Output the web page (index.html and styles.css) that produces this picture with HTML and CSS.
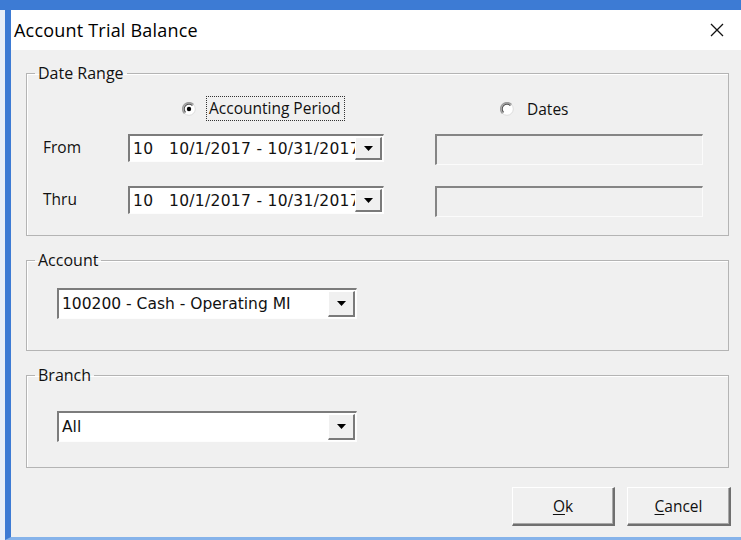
FILE: index.html
```html
<!DOCTYPE html>
<html lang="en">
<head>
<meta charset="utf-8">
<title>Account Trial Balance</title>
<link rel="stylesheet" href="styles.css">
</head>
<body>
<div class="frame">
  <div class="window">
    <header class="titlebar">
      <span class="title">Account Trial Balance</span>
      <svg class="close" width="14" height="14" viewBox="0 0 14 14" aria-label="Close">
        <path d="M1 1 L13 13 M13 1 L1 13" stroke="#111" stroke-width="1.3" fill="none"/>
      </svg>
    </header>

    <main class="content">
      <fieldset class="group group-dates">
        <legend>Date Range</legend>
        <div class="date-grid">
          <label class="radio radio-period">
            <svg class="radio-dot" width="14" height="14" viewBox="0 0 14 14">
              <circle cx="7" cy="7" r="6.3" fill="#fff" stroke="#dcdcdc" stroke-width="1"/>
              <path d="M2.5 11.5 A6.3 6.3 0 0 1 11.5 2.5" stroke="#9c9c9c" stroke-width="1.5" fill="none"/>
              <path d="M3.6 10.4 A4.8 4.8 0 0 1 10.4 3.6" stroke="#555" stroke-width="1.2" fill="none"/>
              <circle cx="7" cy="7" r="2.2" fill="#000"/>
            </svg>
            <span class="focus">Accounting Period</span>
          </label>
          <label class="radio radio-dates">
            <svg class="radio-dot" width="14" height="14" viewBox="0 0 14 14">
              <circle cx="7" cy="7" r="6.3" fill="#fff" stroke="#dcdcdc" stroke-width="1"/>
              <path d="M2.5 11.5 A6.3 6.3 0 0 1 11.5 2.5" stroke="#9c9c9c" stroke-width="1.5" fill="none"/>
              <path d="M3.6 10.4 A4.8 4.8 0 0 1 10.4 3.6" stroke="#555" stroke-width="1.2" fill="none"/>
            </svg>
            <span>Dates</span>
          </label>

          <span class="field-label row-from">From</span>
          <div class="combo combo-period row-from">
            <span class="combo-text">10&nbsp;&nbsp;&nbsp;10/1/2017 - 10/31/2017</span>
            <span class="combo-btn"><svg width="9" height="5" viewBox="0 0 9 5"><path d="M0 0 H9 L4.5 5 Z" fill="#000"/></svg></span>
          </div>
          <div class="textbox row-from"></div>

          <span class="field-label row-thru">Thru</span>
          <div class="combo combo-period row-thru">
            <span class="combo-text">10&nbsp;&nbsp;&nbsp;10/1/2017 - 10/31/2017</span>
            <span class="combo-btn"><svg width="9" height="5" viewBox="0 0 9 5"><path d="M0 0 H9 L4.5 5 Z" fill="#000"/></svg></span>
          </div>
          <div class="textbox row-thru"></div>
        </div>
      </fieldset>

      <fieldset class="group group-account">
        <legend>Account</legend>
        <div class="group-body">
          <div class="combo combo-wide">
            <span class="combo-text">100200 - Cash - Operating MI</span>
            <span class="combo-btn"><svg width="9" height="5" viewBox="0 0 9 5"><path d="M0 0 H9 L4.5 5 Z" fill="#000"/></svg></span>
          </div>
        </div>
      </fieldset>

      <fieldset class="group group-branch">
        <legend>Branch</legend>
        <div class="group-body">
          <div class="combo combo-wide">
            <span class="combo-text">All</span>
            <span class="combo-btn"><svg width="9" height="5" viewBox="0 0 9 5"><path d="M0 0 H9 L4.5 5 Z" fill="#000"/></svg></span>
          </div>
        </div>
      </fieldset>

      <div class="actions">
        <button class="btn btn-ok" type="button"><u>O</u>k</button>
        <button class="btn btn-cancel" type="button"><u>C</u>ancel</button>
      </div>
    </main>
  </div>
</div>
</body>
</html>
```

FILE: styles.css
```css
* {
  box-sizing: border-box;
}

html, body {
  margin: 0;
  padding: 0;
  width: 741px;
  height: 540px;
  overflow: hidden;
}

body {
  font-family: "Open Sans", "Noto Sans", sans-serif;
  font-size: 15.5px;
  color: #111;
}

/* Outer window chrome: accent band on top, accent edge on the left */
.frame {
  height: 540px;
  border-top: 10px solid #3d7bd4;
  padding-left: 5px;
  background: #e9eff8;
}

.window {
  height: 530px;
  border-left: 6px solid #3d7bd4;
  border-bottom: 3px solid #86b3ea;
  background: #f0f0f0;
  display: flex;
  flex-direction: column;
}

.titlebar {
  height: 40px;
  flex: none;
  background: #fff;
  display: flex;
  align-items: center;
  justify-content: space-between;
  padding: 0 17px 1px 3px;
}

.title {
  font-size: 18px;
  letter-spacing: 0.2px;
  color: #000;
}

.close {
  display: block;
}

.content {
  flex: 1;
  display: flex;
  flex-direction: column;
  gap: 14px;
  padding: 13px 12px 0 15px;
}

/* Group boxes */
.group {
  margin: 0;
  padding: 0;
  min-inline-size: 0;
  border: 1px solid #b4b4b4;
  box-shadow: inset 1px 1px 0 #fff;
}

.group legend {
  margin-left: 8px;
  padding: 0 3px;
  line-height: 20px;
  font-size: 16px;
  color: #111;
}

.group-dates {
  height: 173px;
}

.group-account {
  height: 101px;
}

.group-account .group-body {
  padding: 18px 0 0 30px;
}

.group-branch {
  height: 103px;
}

.group-branch .group-body {
  padding: 26px 0 0 30px;
}

/* Date range: label | period combo | spacer | date box */
.date-grid {
  display: grid;
  grid-template-columns: 85px 256px 51px 268px;
  grid-template-rows: 25px 13px 28px 24px 28px;
  padding: 13px 0 0 16px;
}

.radio-period {
  grid-column: 2;
  grid-row: 1;
}

.radio-dates {
  grid-column: 4;
  grid-row: 1;
}

.row-from {
  grid-row: 3;
}

.row-thru {
  grid-row: 5;
}

.field-label {
  grid-column: 1;
  line-height: 26px;
}

.combo-period {
  grid-column: 2;
}

.textbox {
  grid-column: 4;
}

.radio {
  display: flex;
  align-items: center;
  height: 25px;
}

.radio-period {
  padding-left: 54px;
}

.radio-dates {
  padding-left: 65px;
}

.radio-dot {
  flex: none;
  display: block;
}

.radio-period .radio-dot {
  margin-right: 10px;
}

.radio-dates .radio-dot {
  margin-right: 13px;
}

.focus {
  height: 25px;
  line-height: 22px;
  padding: 0 4px 0 2px;
  border: 1px dotted #333;
}

/* Combo boxes */
.combo {
  display: flex;
  align-items: stretch;
  background: #fff;
  border-top: 2px solid #7c7c7c;
  border-left: 2px solid #7c7c7c;
  border-right: 1px solid #fdfdfd;
  border-bottom: 1px solid #fdfdfd;
  font-family: "DejaVu Sans", sans-serif;
  font-size: 15.5px;
  color: #111;
}

.combo-period {
  height: 28px;
  letter-spacing: 0.3px;
}

.combo-wide {
  width: 300px;
  height: 31px;
}

.combo-text {
  flex: 1;
  min-width: 0;
  overflow: hidden;
  white-space: nowrap;
  padding-left: 3px;
  display: flex;
  align-items: center;
}

.combo-btn {
  flex: none;
  width: 27px;
  margin: 1px 1px 1px 0;
  background: #f0f0f0;
  border-top: 1px solid #fff;
  border-left: 1px solid #fff;
  border-right: 2px solid #7a7a7a;
  border-bottom: 2px solid #7a7a7a;
  display: flex;
  align-items: center;
  justify-content: center;
}

.combo-btn svg {
  display: block;
}

/* Disabled date entry boxes */
.textbox {
  height: 31px;
  background: #f0f0f0;
  border-top: 2px solid #858585;
  border-left: 2px solid #858585;
  border-right: 1px solid #fbfbfb;
  border-bottom: 1px solid #fbfbfb;
}

/* Dialog buttons */
.actions {
  display: flex;
  justify-content: flex-end;
  gap: 12px;
  margin-top: 5px;
  margin-right: -2px;
}

.btn {
  height: 39px;
  padding: 0;
  font-family: inherit;
  font-size: 15.5px;
  color: #111;
  background: #f0f0f0;
  border-top: 1px solid #fff;
  border-left: 1px solid #fff;
  border-right: 2px solid #6f6f6f;
  border-bottom: 2px solid #6f6f6f;
  box-shadow: inset -1px -1px 0 #a8a8a8;
}

.btn-ok {
  width: 103px;
}

.btn-cancel {
  width: 104px;
}

.btn u {
  text-decoration-thickness: 1px;
  text-underline-offset: 2px;
}
```
